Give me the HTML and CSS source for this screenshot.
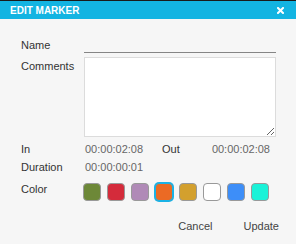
FILE: index.html
```html
<!DOCTYPE html>
<html lang="en">
<head>
    <meta charset="UTF-8">
    <meta name="viewport" content="width=device-width, initial-scale=1.0">
    <title>Edit Marker</title>
    <link rel="stylesheet" href="styles.css">
</head>
<body>
    <div class="dialog">
        <div class="dialog-header">
            <span class="dialog-title">EDIT MARKER</span>
            <svg class="close-icon" width="7" height="7" viewBox="0 0 7 7">
                <path d="M1 1 L6 6 M6 1 L1 6" stroke="#fff" stroke-width="2" stroke-linecap="square"/>
            </svg>
        </div>

        <div class="form">
            <div class="row row-name">
                <label class="label" for="marker-name">Name</label>
                <input class="name-input" id="marker-name" type="text">
            </div>
            <div class="row row-comments">
                <label class="label" for="marker-comments">Comments</label>
                <textarea class="comments-input" id="marker-comments"></textarea>
            </div>
            <div class="row row-time">
                <span class="label">In</span>
                <span class="time-value in-value">00:00:02:08</span>
                <span class="out-label">Out</span>
                <span class="time-value out-value">00:00:02:08</span>
            </div>
            <div class="row row-duration">
                <span class="label">Duration</span>
                <span class="time-value">00:00:00:01</span>
            </div>
            <div class="row row-color">
                <span class="label color-label">Color</span>
                <div class="swatches">
                    <span class="swatch" style="background: #6d8838;"></span>
                    <span class="swatch" style="background: #d42b3b;"></span>
                    <span class="swatch" style="background: #b08ab7;"></span>
                    <span class="swatch selected" style="background: #eb6a24;"></span>
                    <span class="swatch" style="background: #d3a02e;"></span>
                    <span class="swatch" style="background: #ffffff;"></span>
                    <span class="swatch" style="background: #3d8ef8;"></span>
                    <span class="swatch" style="background: #1af2d8;"></span>
                </div>
            </div>
        </div>

        <div class="actions">
            <button type="button" class="action-btn">Cancel</button>
            <button type="button" class="action-btn">Update</button>
        </div>
    </div>
</body>
</html>
```

FILE: styles.css
```css
body {
    margin: 0;
    background-color: #f6f6f6;
    font-family: "Liberation Sans", Arial, sans-serif;
    font-size: 11px;
    color: #333;
}

.dialog {
    width: 296px;
    height: 244px;
    background-color: #f6f6f6;
}

.dialog-header {
    display: flex;
    justify-content: space-between;
    align-items: center;
    height: 18px;
    border-top: 1px solid #1a1a1a;
    background-color: #13b4e2;
    padding: 0 12px 0 10px;
}

.dialog-title {
    color: #fff;
    font-weight: bold;
    font-size: 10px;
    line-height: 12px;
    padding-top: 2px;
}

.close-icon {
    display: block;
    margin-top: 1px;
}

.form {
    padding: 17px 20px 0 21px;
}

.row {
    display: flex;
    align-items: flex-start;
    line-height: 13px;
}

.label {
    width: 63px;
    flex-shrink: 0;
}

.row-name .label,
.row-comments .label {
    padding-top: 3px;
}

.name-input {
    flex: 1;
    height: 17px;
    box-sizing: border-box;
    border: none;
    border-bottom: 1px solid #858585;
    background: transparent;
    padding: 0;
    outline: none;
}

.row-comments {
    margin-top: 4px;
}

.comments-input {
    flex: 1;
    height: 80px;
    box-sizing: border-box;
    border: 1px solid #dcdcdc;
    background-color: #fff;
    margin: 0;
    padding: 2px;
    resize: both;
}

.row-time {
    margin-top: 6px;
}

.time-value {
    color: #666;
    padding-left: 1px;
}

.in-value {
    width: 78px;
    flex-shrink: 0;
    box-sizing: border-box;
}

.out-label {
    color: #333;
}

.out-value {
    margin-left: auto;
    margin-right: 6px;
}

.row-duration {
    margin-top: 5px;
}

.row-color {
    margin-top: 9px;
}

.color-label {
    width: 62px;
}

.swatches {
    display: flex;
    gap: 6px;
}

.swatch {
    width: 18px;
    height: 18px;
    box-sizing: border-box;
    border: 1px solid #999;
    border-radius: 4px;
}

.swatch.selected {
    border-color: #1ab2e6;
    box-shadow: 0 0 0 1px #1ab2e6;
}

.actions {
    display: flex;
    justify-content: flex-end;
    margin-top: 19px;
    padding-right: 17px;
}

.action-btn {
    background: none;
    border: none;
    padding: 0;
    margin-left: 31px;
    font-family: "Liberation Sans", Arial, sans-serif;
    font-size: 11px;
    line-height: 13px;
    color: #444;
    cursor: pointer;
}
```
